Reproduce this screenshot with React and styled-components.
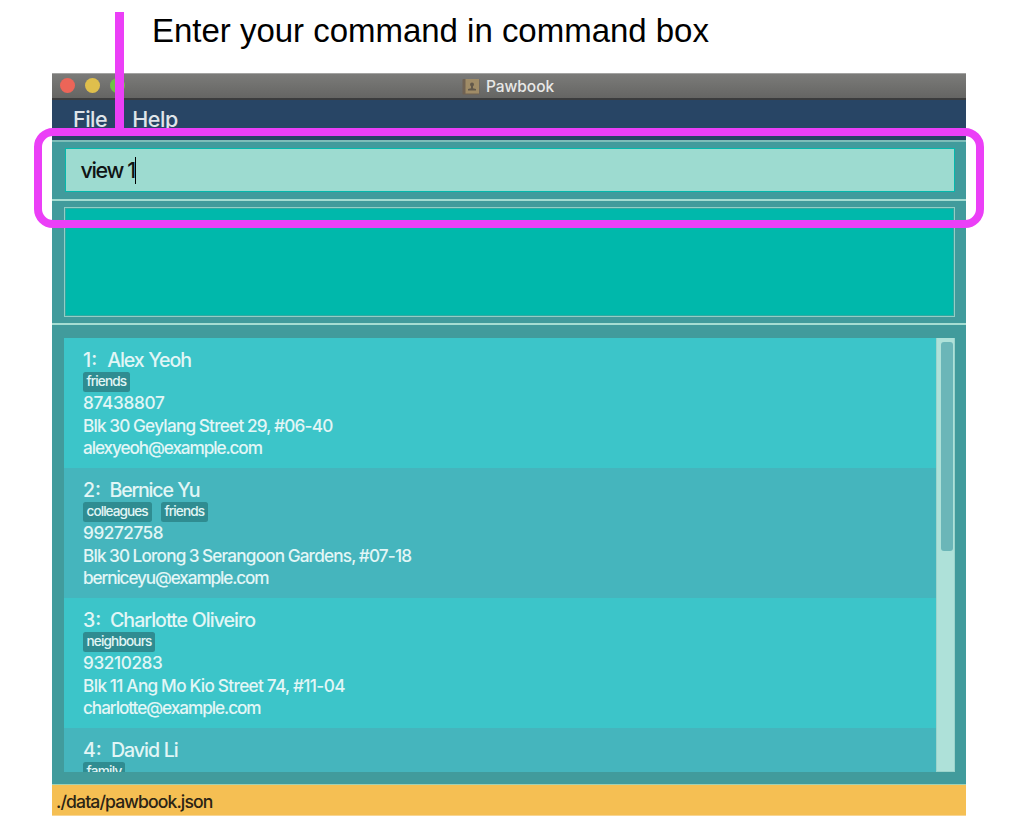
import React from 'react';
import styled, { createGlobalStyle } from 'styled-components';

const GlobalStyle = createGlobalStyle`
  *, *::before, *::after { box-sizing: border-box; }
  body { margin: 0; background: #fff; font-family: Inter, "Liberation Sans", sans-serif; }
`;

const Page = styled.div`
  position: relative;
  width: 1010px;
  height: 840px;
  overflow: hidden;
`;

const Caption = styled.p`
  margin: 0;
  padding: 12px 0 0 152px;
  height: 73px;
  font: 33px/38px "Liberation Sans", Arial, sans-serif;
  letter-spacing: ${(p) => p.$track}px;
  color: #000;
  white-space: nowrap;
`;

const Window = styled.main`
  display: flex;
  flex-direction: column;
  width: 914px;
  height: 743px;
  margin-left: 52px;
  background: #419b9c;
`;

const TitleBar = styled.header`
  position: relative;
  display: flex;
  align-items: center;
  justify-content: center;
  gap: 6px;
  height: 27px;
  padding-right: 2px;
  border-top: 1px solid #a3a3a2;
  border-bottom: 2px solid #3b3c3d;
  background: linear-gradient(#7b7b79, #656563);
`;

const Lights = styled.div`
  position: absolute;
  left: 8.4px;
  top: 4.3px;
  display: flex;
  gap: 10px;
`;

const Light = styled.span`
  width: 15px;
  height: 15px;
  border-radius: 50%;
  background: ${(p) => p.$color};
`;

const Title = styled.span`
  padding-top: 2px;
  font-size: 15.5px;
  font-weight: 450;
  line-height: 20px;
  letter-spacing: ${(p) => p.$track}px;
  color: #e8e8e7;
`;

const MenuBar = styled.nav`
  display: flex;
  gap: 25px;
  height: 40px;
  padding: 6px 0 0 21px;
  background: #284565;
`;

const MenuItem = styled.span`
  font-size: 21.5px;
  font-weight: 450;
  line-height: 26px;
  letter-spacing: ${(p) => p.$track}px;
  color: #dfe4e9;
`;

const CommandPane = styled.section`
  height: 61px;
  padding: 6px 11px 0 13px;
  border-top: 2px solid #7dbdb8;
  border-bottom: 2px solid #a5ddd2;
`;

const CommandBox = styled.div`
  display: flex;
  align-items: center;
  height: 44px;
  padding: 0 0 0 14.5px;
  border: 1px solid #04b9ac;
  background: #9ddbd0;
`;

const CommandText = styled.span`
  padding-top: 1px;
  font-size: 21.5px;
  font-weight: 450;
  line-height: 27px;
  letter-spacing: ${(p) => p.$track}px;
  color: #101414;
`;

const Caret = styled.span`
  width: 1px;
  height: 27px;
  background: #000;
`;

const ResultPane = styled.section`
  height: 124px;
  padding: 6px 11px 0 12px;
  border-bottom: 2px solid #a5ddd2;
`;

const ResultBox = styled.div`
  height: 110px;
  border: 1px solid #94cdc5;
  box-shadow: inset 0 0 0 1px #30aaa3;
  background: #00b8ab;
`;

const ListPane = styled.section`
  height: 459px;
  padding: 13px 11px 12px 12px;
`;

const ListView = styled.div`
  display: flex;
  height: 434px;
  overflow: hidden;
`;

const Cards = styled.div`
  flex: 1;
`;

const Card = styled.article`
  height: 130.1px;
  padding: 10.5px 0 0 19px;
  background: ${(p) => (p.$alt ? '#45b5bd' : '#3cc5c9')};
  color: #e2f6f6;
  white-space: nowrap;
`;

const Name = styled.h2`
  display: flex;
  margin: 0;
  height: 23.6px;
  font-size: 19.6px;
  font-weight: 450;
  line-height: 23.7px;
`;

const Index = styled.span`
  width: ${(p) => p.$width}px;
`;

const Tracked = styled.span`
  letter-spacing: ${(p) => p.$track}px;
  word-spacing: 0.5px;
`;

const Tags = styled.div`
  display: flex;
  gap: 9px;
  height: 20.2px;
`;

const Tag = styled.span`
  width: ${(p) => p.$width}px;
  height: 19.5px;
  padding-left: 3.5px;
  border-radius: 2.5px;
  background: #2f8c91;
  font-size: 13.6px;
  font-weight: 450;
  line-height: 19px;
  letter-spacing: ${(p) => p.$track}px;
`;

const Line = styled.div`
  height: 22.4px;
  font-size: 17.2px;
  font-weight: 450;
  line-height: 22.4px;
  letter-spacing: ${(p) => p.$track}px;
  word-spacing: -0.5px;
`;

const ScrollTrack = styled.div`
  width: 19px;
  padding: 4px 3px 0 4px;
  border: 1px solid #9bd4cc;
  border-width: 0 1px 1px;
  background: #aee1d9;
`;

const ScrollThumb = styled.div`
  width: 12px;
  height: 209px;
  border-radius: 3px;
  background: #6bb6b8;
`;

const StatusBar = styled.footer`
  height: 32px;
  padding: 4px 0 0 4px;
  border-top: 1px solid #9fd0b4;
  border-bottom: 1px solid #f8d592;
  background: #f5bf53;
  font-size: 17.6px;
  font-weight: 450;
  line-height: 26px;
  letter-spacing: ${(p) => p.$track}px;
  color: #2b2415;
`;

const Pointer = styled.div`
  position: absolute;
  left: 115px;
  top: 12px;
  width: 9px;
  height: 120px;
  background: #eb3ff7;
`;

const Highlight = styled.div`
  position: absolute;
  left: 34px;
  top: 128px;
  width: 950px;
  height: 100px;
  border: 8px solid #eb3ff7;
  border-radius: 19px;
`;

const people = [
  {
    name: 'Alex Yeoh', gap: 24.2, track: -1.1,
    tags: [['friends', 47, -0.9]],
    lines: [['87438807', -0.3], ['Blk 30 Geylang Street 29, #06-40', -0.75], ['alexyeoh@example.com', -1.1]],
  },
  {
    name: 'Bernice Yu', gap: 26.5, track: -1.22,
    tags: [['colleagues', 69, -0.95], ['friends', 47, -0.9]],
    lines: [['99272758', -0.45], ['Blk 30 Lorong 3 Serangoon Gardens, #07-18', -0.81], ['berniceyu@example.com', -1.13]],
  },
  {
    name: 'Charlotte Oliveiro', gap: 27, track: -1,
    tags: [['neighbours', 72, -0.85]],
    lines: [['93210283', -0.4], ['Blk 11 Ang Mo Kio Street 74, #11-04', -0.62], ['charlotte@example.com', -1.06]],
  },
  {
    name: 'David Li', gap: 28, track: -1.05,
    tags: [['family', 42, -0.75]],
    lines: [],
  },
];

function BookIcon() {
  return (
    <svg width="18" height="17" viewBox="0 0 18 17">
      <rect x="0.5" y="1" width="17" height="15.5" rx="1" fill="#706253" />
      <rect x="3.5" y="1" width="13.5" height="14.5" fill="#a08c67" />
      <circle cx="10" cy="6.5" r="2" fill="#62584a" />
      <path d="M9 8h2v2.3l3 .7v1.6H6V11l3-.7z" fill="#62584a" />
    </svg>
  );
}

export default function App() {
  return (
    <>
      <GlobalStyle />
      <Page>
        <Caption $track={-0.02}>Enter your command in command box</Caption>
        <Window>
          <TitleBar>
            <Lights>
              <Light $color="#ec6558" />
              <Light $color="#dfbf4c" />
              <Light $color="#72bf47" />
            </Lights>
            <BookIcon />
            <Title $track={-0.05}>Pawbook</Title>
          </TitleBar>
          <MenuBar>
            <MenuItem $track={-0.5}>File</MenuItem>
            <MenuItem $track={-0.4}>Help</MenuItem>
          </MenuBar>
          <CommandPane>
            <CommandBox>
              <CommandText $track={-1.35}>view 1</CommandText>
              <Caret />
            </CommandBox>
          </CommandPane>
          <ResultPane>
            <ResultBox />
          </ResultPane>
          <ListPane>
            <ListView>
              <Cards>
                {people.map((p, i) => (
                  <Card key={p.name} $alt={i % 2 === 1}>
                    <Name>
                      <Index $width={p.gap}>{i + 1}:</Index>
                      <Tracked $track={p.track}>{p.name}</Tracked>
                    </Name>
                    <Tags>
                      {p.tags.map(([label, width, track]) => (
                        <Tag key={label} $width={width} $track={track}>{label}</Tag>
                      ))}
                    </Tags>
                    {p.lines.map(([text, track]) => (
                      <Line key={text} $track={track}>{text}</Line>
                    ))}
                  </Card>
                ))}
              </Cards>
              <ScrollTrack>
                <ScrollThumb />
              </ScrollTrack>
            </ListView>
          </ListPane>
          <StatusBar $track={-0.89}>./data/pawbook.json</StatusBar>
        </Window>
        <Pointer />
        <Highlight />
      </Page>
    </>
  );
}
